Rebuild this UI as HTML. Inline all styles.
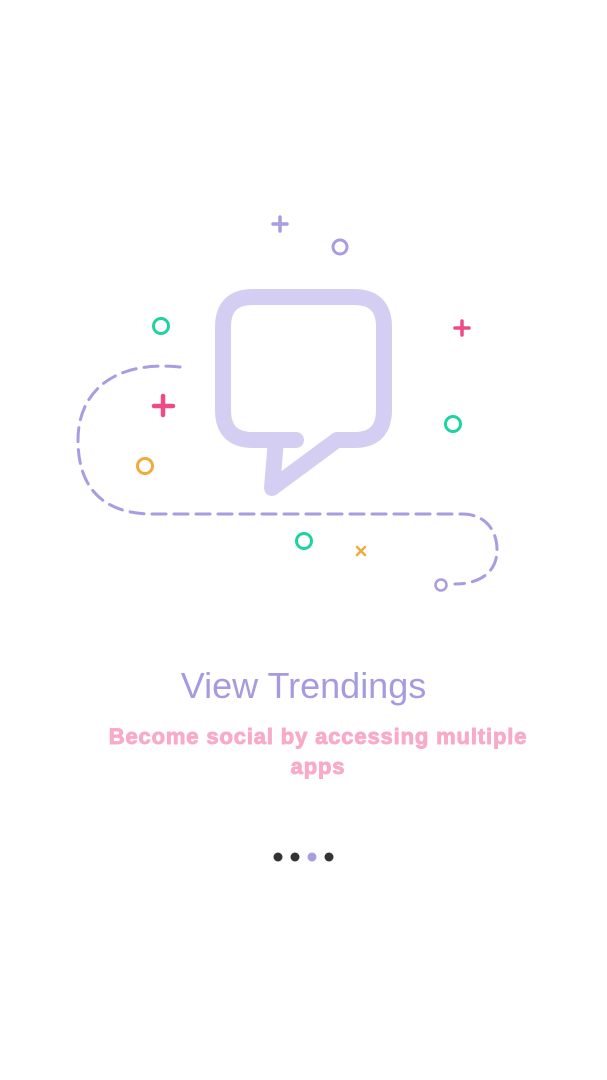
<!DOCTYPE html>
<html><head><style>
html,body{margin:0;padding:0;background:#fff;width:607px;height:1080px;overflow:hidden;position:relative}
.t{position:absolute;left:0;width:607px;text-align:center;font-family:"Liberation Sans",sans-serif}
</style></head><body>
<svg width="607" height="1080" style="position:absolute;left:0;top:0">
<g fill="none" stroke-linecap="round" stroke-linejoin="round">
<path d="M296 440 H253 Q223 440 223 410 V327 Q223 297 253 297 H354 Q384 297 384 327 V410 Q384 440 354 440 H337 L272 488 L276 440" stroke="#d4cef2" stroke-width="16"/>
<path d="M180 367 C110 360 78 395 78 440 C78 490 105 513 150 514 H462 C485 514 497 530 497 550 C497 572 480 584 455 584" stroke="#a79de0" stroke-width="3" stroke-dasharray="14 8"/>
<circle cx="441" cy="585" r="5.5" stroke="#a79de0" stroke-width="2.5"/>
<circle cx="340" cy="247" r="7" stroke="#a79de0" stroke-width="3"/>
<circle cx="161" cy="326" r="7.5" stroke="#1fd3a0" stroke-width="3"/>
<circle cx="453" cy="424" r="7.5" stroke="#1fd3a0" stroke-width="3"/>
<circle cx="304" cy="541" r="7.5" stroke="#1fd3a0" stroke-width="3"/>
<circle cx="145" cy="466" r="7.5" stroke="#f0ab3c" stroke-width="3"/>
<path d="M273 224 H287 M280 217 V231" stroke="#a79de0" stroke-width="3.5"/>
<path d="M455 328 H469 M462 321 V335" stroke="#ee4a86" stroke-width="3.5"/>
<path d="M154 406 H173 M163 396 V415" stroke="#ee4a86" stroke-width="4.5"/>
<path d="M357 547 L365 555 M365 547 L357 555" stroke="#f0ab3c" stroke-width="2.5"/>
<circle cx="278" cy="857" r="4.5" fill="#333" stroke="none"/>
<circle cx="295" cy="857" r="4.5" fill="#333" stroke="none"/>
<circle cx="312" cy="857" r="4.5" fill="#a79de0" stroke="none"/>
<circle cx="329" cy="857" r="4.5" fill="#333" stroke="none"/>
</g></svg>
<div class="t" style="top:665px;left:0;font-size:36px;color:#a59be0;">View Trendings</div>
<div class="t" style="top:722px;left:93px;width:450px;font-size:22px;letter-spacing:0.85px;font-weight:bold;-webkit-text-stroke:0.9px #f9aac8;color:#f9aac8;line-height:30px">Become social by accessing multiple apps</div>
</body></html>
